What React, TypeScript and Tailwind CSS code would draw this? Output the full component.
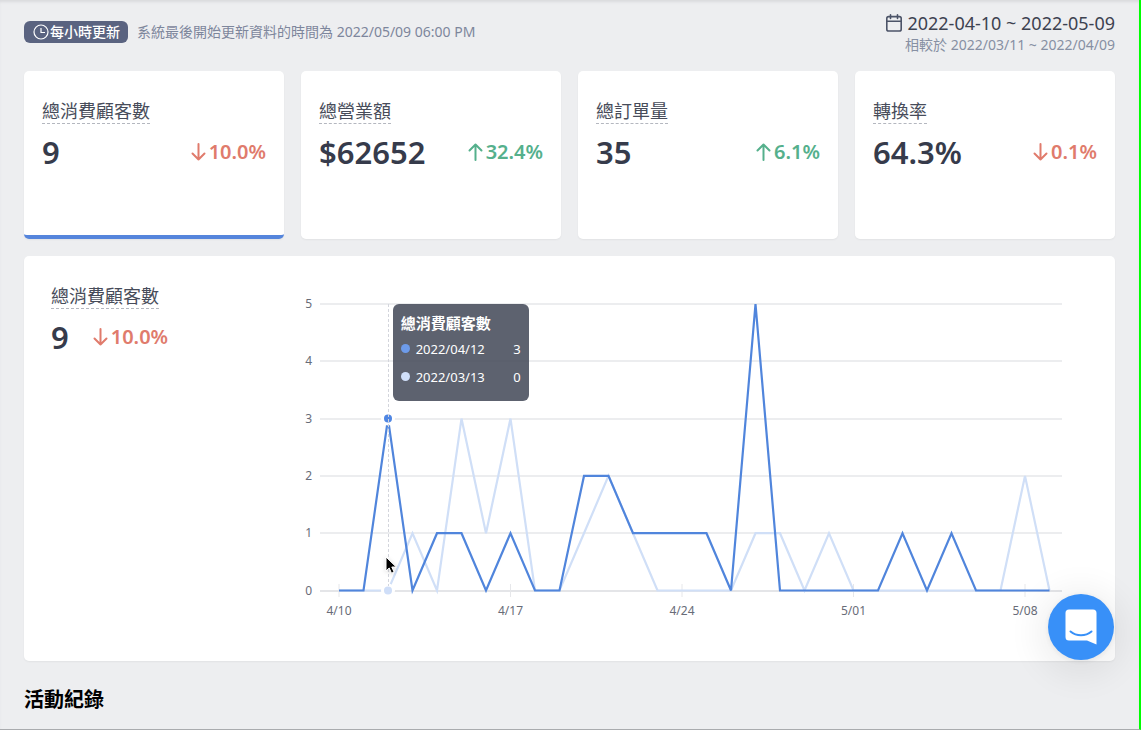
import { useState } from "react";

type Metric = {
  id: string;
  label: string;
  value: string;
  change: string;
  up: boolean;
};

const metrics: Metric[] = [
  { id: "customers", label: "總消費顧客數", value: "9", change: "10.0%", up: false },
  { id: "revenue", label: "總營業額", value: "$62652", change: "32.4%", up: true },
  { id: "orders", label: "總訂單量", value: "35", change: "6.1%", up: true },
  { id: "conversion", label: "轉換率", value: "64.3%", change: "0.1%", up: false },
];

// One value per day, starting 4/10 and 3/11
const current = [
  0, 0, 3, 0, 1, 1, 0, 1, 0, 0, 2, 2, 1, 1, 1, 1, 0, 5, 0, 0, 0, 0, 0, 1, 0, 1,
  0, 0, 0, 0,
];
const previous = [
  0, 0, 0, 1, 0, 3, 1, 3, 0, 0, 1, 2, 1, 0, 0, 0, 0, 1, 1, 0, 1, 0, 0, 0, 0, 0,
  0, 0, 2, 0,
];

const ticks = [
  { day: 0, label: "4/10" },
  { day: 7, label: "4/17" },
  { day: 14, label: "4/24" },
  { day: 21, label: "5/01" },
  { day: 28, label: "5/08" },
];

const hoverDay = 2;

const x = (day: number) => 39 + day * 24.5;
const y = (value: number) => 300.5 - value * 57.3;
const toPoints = (values: number[]) =>
  values.map((v, i) => `${x(i)},${y(v)}`).join(" ");

function Change({ up, children }: { up: boolean; children: string }) {
  return (
    <span
      className={`flex items-center gap-[3px] text-xl leading-7 font-semibold ${
        up ? "text-[#55b08c]" : "text-[#e07b6c]"
      }`}
    >
      <svg
        width="15"
        height="18"
        viewBox="0 0 15 18"
        fill="none"
        stroke="currentColor"
        strokeWidth="2"
        strokeLinecap="round"
        strokeLinejoin="round"
        aria-hidden="true"
      >
        {up ? (
          <path d="M7.5 17V1.5M1.5 7.5l6-6 6 6" />
        ) : (
          <path d="M7.5 1v15.5M1.5 10.5l6 6 6-6" />
        )}
      </svg>
      {children}
    </span>
  );
}

function MetricLabel({ children }: { children: string }) {
  return (
    <span className="border-b border-dashed border-[#b4b7bf] text-lg leading-6 text-[#474c5a]">
      {children}
    </span>
  );
}

function MetricValue({ children }: { children: string }) {
  return (
    <span className="text-[31px] leading-11 font-semibold text-[#363b4b]">
      {children}
    </span>
  );
}

function Header() {
  return (
    <header className="flex items-start justify-between">
      <div className="flex items-center gap-[9px] pt-2">
        <span className="flex h-[22px] items-center gap-px rounded-md bg-[#5a6380] px-[9px] pr-2 text-sm font-medium text-white">
          <svg
            width="16"
            height="16"
            viewBox="0 0 16 16"
            fill="none"
            stroke="currentColor"
            strokeWidth="1.2"
            aria-hidden="true"
          >
            <circle cx="8" cy="8" r="7" />
            <path d="M8 4v4.5h4" />
          </svg>
          每小時更新
        </span>
        <p className="text-sm text-[#7d869c]">
          系統最後開始更新資料的時間為 2022/05/09 06:00 PM
        </p>
      </div>

      <div className="flex flex-col items-end">
        <button
          type="button"
          className="flex items-center gap-[5px] text-lg leading-5 text-[#3d4250]"
        >
          <svg
            width="16"
            height="18"
            viewBox="0 0 16 18"
            fill="none"
            stroke="#4c5468"
            strokeWidth="1.6"
            strokeLinecap="round"
            aria-hidden="true"
          >
            <rect x="0.8" y="2.6" width="14.4" height="14.4" rx="1.8" />
            <path d="M0.8 7.2h14.4M4.5 0.8v3.6M11.5 0.8v3.6" />
          </svg>
          2022-04-10 ~ 2022-05-09
        </button>
        <p className="text-sm leading-6 text-[#8790a3]">
          相較於 2022/03/11 ~ 2022/04/09
        </p>
      </div>
    </header>
  );
}

function TrendChart({ label }: { label: string }) {
  return (
    <div className="relative min-w-0 flex-1">
      <svg viewBox="0 0 772 340" className="block h-auto w-full" role="img" aria-label={label}>
        {[0, 1, 2, 3, 4, 5].map((v) => (
          <g key={v}>
            <path
              d={`M20 ${Math.round(y(v))}H762`}
              stroke={v === 0 ? "#e4e5e8" : "#ecedef"}
              strokeWidth="2"
            />
            <text x="12" y={y(v) + 4} textAnchor="end" className="fill-[#686c78] text-xs">
              {v}
            </text>
          </g>
        ))}

        {ticks.map((t) => (
          <g key={t.day}>
            <path d={`M${x(t.day)} 294v13`} stroke="#e6e7ea" />
            <text x={x(t.day)} y="325" textAnchor="middle" className="fill-[#686c78] text-xs">
              {t.label}
            </text>
          </g>
        ))}

        <polyline points={toPoints(previous)} fill="none" stroke="#d0dff7" strokeWidth="2.2" />
        <polyline points={toPoints(current)} fill="none" stroke="#5085dc" strokeWidth="2.2" />

        {/* hovered day */}
        <circle cx={x(hoverDay)} cy={y(3)} r="7" fill="#fff" />
        <circle cx={x(hoverDay)} cy={y(3)} r="4" fill="#4f86e3" />
        <circle cx={x(hoverDay)} cy={y(0)} r="7" fill="#fff" />
        <circle cx={x(hoverDay)} cy={y(0)} r="4" fill="#cfdef8" />
        <path
          d={`M${x(hoverDay) + 0.5} 14V296`}
          stroke="#d3d5dc"
          strokeDasharray="3 2"
        />

        {/* mouse pointer */}
        <path
          d="M86 267v14l3.2-3 2.3 5.2 2.6-1.1-2.3-5.1h4.5z"
          fill="#000"
          stroke="#fff"
          className="drop-shadow-sm"
        />
      </svg>

      <div className="absolute top-[4%] left-[12%] w-[136px] rounded-md bg-[#474c5b]/88 px-2 pt-[7px] pb-[10px] text-white">
        <p className="text-[15px] leading-6 font-bold">{label}</p>
        <dl className="text-[13px] leading-7">
          <div className="flex items-center">
            <dt className="flex flex-1 items-center gap-[6px]">
              <span className="size-[9px] rounded-full bg-[#6d9bea]" />
              2022/04/12
            </dt>
            <dd>3</dd>
          </div>
          <div className="flex items-center">
            <dt className="flex flex-1 items-center gap-[6px]">
              <span className="size-[9px] rounded-full bg-[#d0dffa]" />
              2022/03/13
            </dt>
            <dd>0</dd>
          </div>
        </dl>
      </div>
    </div>
  );
}

export default function App() {
  const [selected, setSelected] = useState("customers");
  const active = metrics.find((m) => m.id === selected) ?? metrics[0];

  return (
    <div
      lang="zh-Hant"
      className="min-h-screen border-r-2 border-b border-r-[#00ff00] border-b-[#a9abae] bg-[#edeef0] px-6 font-['Noto_Sans','Noto_Sans_CJK_TC',sans-serif] shadow-[inset_0_3px_3px_-1px_#d9dadd]"
    >
      <div className="pt-[13px]">
        <Header />
      </div>

      <main>
        <section className="mt-[14px] grid grid-cols-4 gap-[17px]">
          {metrics.map((m) => (
            <button
              key={m.id}
              type="button"
              aria-pressed={m.id === selected}
              onClick={() => setSelected(m.id)}
              className={`flex h-[168px] flex-col items-start overflow-hidden rounded-[5px] border-b-4 bg-white px-[18px] pt-7 text-left shadow-xs ${
                m.id === selected ? "border-[#5585dc]" : "border-white"
              }`}
            >
              <MetricLabel>{m.label}</MetricLabel>
              <span className="mt-[6px] flex w-full items-center justify-between">
                <MetricValue>{m.value}</MetricValue>
                <Change up={m.up}>{m.change}</Change>
              </span>
            </button>
          ))}
        </section>

        <section className="mt-[17px] flex rounded-[5px] bg-white pt-7 pr-[43px] pb-[31px] pl-[27px] shadow-xs">
          <div className="flex w-[249px] shrink-0 flex-col items-start">
            <MetricLabel>{active.label}</MetricLabel>
            <div className="mt-[6px] flex items-center gap-6">
              <MetricValue>{active.value}</MetricValue>
              <Change up={active.up}>{active.change}</Change>
            </div>
          </div>
          <div className="flex min-w-0 flex-1 pt-[6px]">
            <TrendChart label={active.label} />
          </div>
        </section>

        <h2 className="mt-6 pb-[14px] text-xl leading-[30px] font-bold text-black">
          活動紀錄
        </h2>
      </main>

      <button
        type="button"
        aria-label="開啟對話"
        className="fixed right-[27px] bottom-[70px] flex size-[66px] items-center justify-center rounded-full bg-[#3890f8] shadow-[0_1px_6px_rgba(0,0,0,0.08),0_6px_32px_12px_rgba(0,0,0,0.06)]"
      >
        <svg width="32" height="36" viewBox="0 0 32 36" aria-hidden="true">
          <path
            d="M4 0.5h24a3.5 3.5 0 0 1 3.5 3.5v31.5l-9.5-4H4A3.5 3.5 0 0 1 .5 28V4A3.5 3.5 0 0 1 4 .5z"
            fill="#fff"
          />
          <path
            d="M5.5 22.5c6 5 15 5 21 0"
            fill="none"
            stroke="#3890f8"
            strokeWidth="2"
            strokeLinecap="round"
          />
        </svg>
      </button>
    </div>
  );
}
